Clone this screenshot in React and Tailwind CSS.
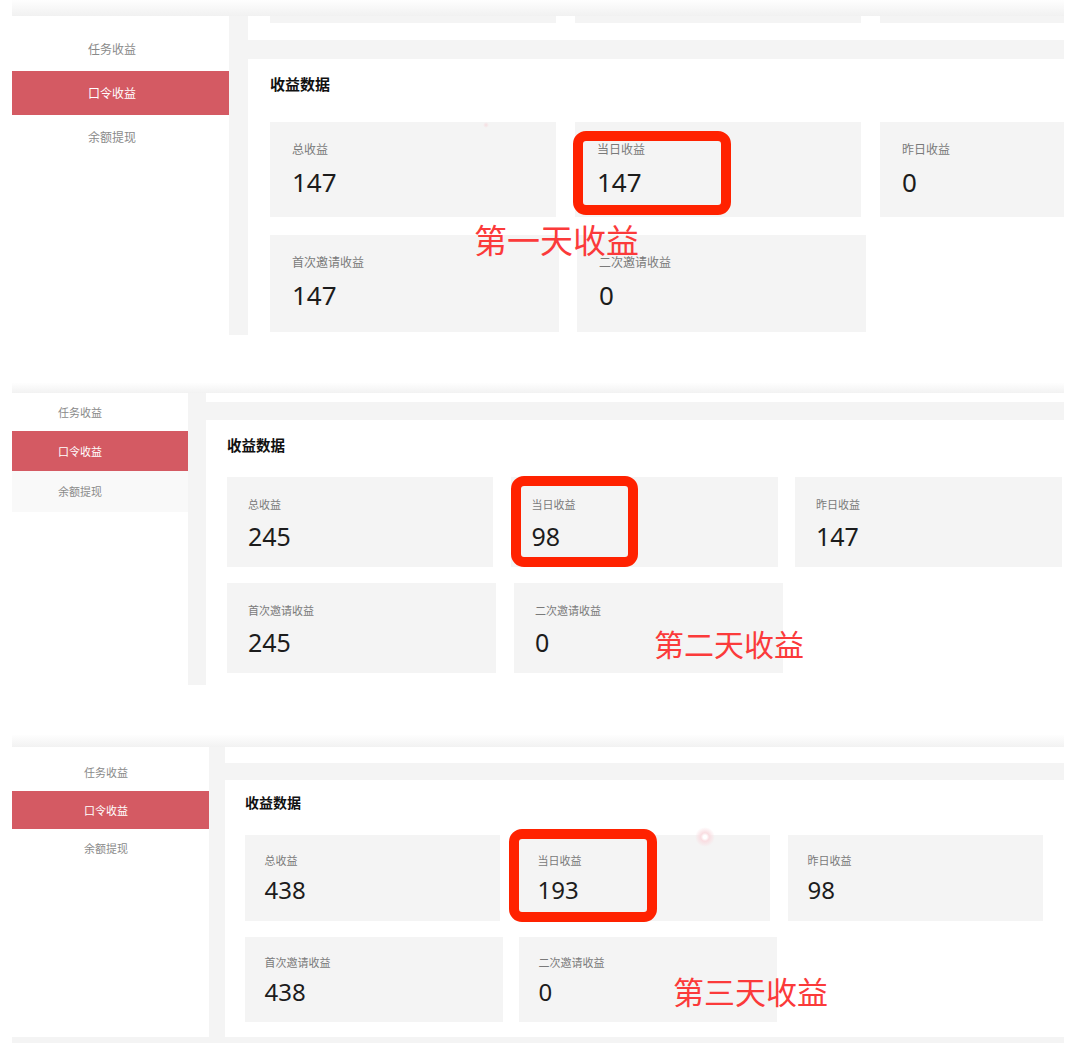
import React from "react";

const CJK = "font-['Noto_Sans_CJK_SC','Noto_Sans',sans-serif]";

function SideItem({ cls, active, children }) {
  return (
    <div
      className={`flex items-center ${CJK} ${cls} ${
        active ? "bg-[#d45a63] text-white" : "text-[#8a8a8a]"
      }`}
    >
      {children}
    </div>
  );
}

function Card({ cls, labelCls, valueCls, label, value }) {
  return (
    <div className={`shrink-0 bg-[#f4f4f4] ${cls}`}>
      <div className={`text-[#7a7a7a] ${CJK} ${labelCls}`}>{label}</div>
      <div className={`text-[#1c1c1c] font-['Noto_Sans',sans-serif] ${valueCls}`}>{value}</div>
    </div>
  );
}

export default function App() {
  return (
    <div className="relative w-[1080px] h-[1059px] bg-white overflow-hidden">
      {/* ---------- Panel 1 ---------- */}
      <div className="ml-[12px] w-[1052px] flex flex-col">
        <div className="h-[16px] bg-linear-to-b from-[#fefefe] to-[#f1f1f1]" />
        <div className="flex">
          <div className="w-[217px] shrink-0 bg-white pt-[11px]">
            <SideItem cls="h-[44px] pl-[76px] text-[12px]">任务收益</SideItem>
            <SideItem cls="h-[44px] pl-[76px] text-[12px]" active>口令收益</SideItem>
            <SideItem cls="h-[44px] pl-[76px] text-[12px]">余额提现</SideItem>
          </div>
          <div className="w-[19px] shrink-0 bg-[#f4f4f4]" />
          <div className="flex-1 min-w-0 overflow-hidden">
            <div className="h-[24px] bg-white flex gap-[19px] pl-[22px]">
              <div className="w-[286px] h-[7px] shrink-0 bg-[#f4f4f4]" />
              <div className="w-[286px] h-[7px] shrink-0 bg-[#f4f4f4]" />
              <div className="w-[286px] h-[7px] shrink-0 bg-[#f4f4f4]" />
            </div>
            <div className="h-[19px] bg-[#f4f4f4]" />
            <div className="bg-white pl-[22px] pt-[15px] pb-[3px]">
              <div className={`h-[20px] leading-[20px] text-[15px] font-bold text-[#111] ${CJK}`}>收益数据</div>
              <div className="mt-[28px] flex gap-[19px]">
                <Card cls="w-[286px] h-[95px] pl-[22px] pt-[19px]" labelCls="text-[12px] leading-[16px]" valueCls="mt-[9px] text-[26px] leading-[32px]" label="总收益" value="147" />
                <Card cls="w-[286px] h-[95px] pl-[22px] pt-[19px]" labelCls="text-[12px] leading-[16px]" valueCls="mt-[9px] text-[26px] leading-[32px]" label="当日收益" value="147" />
                <Card cls="w-[286px] h-[95px] pl-[22px] pt-[19px]" labelCls="text-[12px] leading-[16px]" valueCls="mt-[9px] text-[26px] leading-[32px]" label="昨日收益" value="0" />
              </div>
              <div className="mt-[18px] flex gap-[18px]">
                <Card cls="w-[289px] h-[97px] pl-[22px] pt-[19px]" labelCls="text-[12px] leading-[16px]" valueCls="mt-[9px] text-[26px] leading-[32px]" label="首次邀请收益" value="147" />
                <Card cls="w-[289px] h-[97px] pl-[22px] pt-[19px]" labelCls="text-[12px] leading-[16px]" valueCls="mt-[9px] text-[26px] leading-[32px]" label="二次邀请收益" value="0" />
              </div>
            </div>
          </div>
        </div>
      </div>

      {/* ---------- Panel 2 ---------- */}
      <div className="mt-[48px] ml-[12px] w-[1052px] flex flex-col">
        <div className="h-[10px] bg-linear-to-b from-[#fefefe] to-[#f2f2f2]" />
        <div className="flex">
          <div className="w-[176px] shrink-0 bg-white">
            <SideItem cls="h-[38px] pl-[46px] text-[11px]">任务收益</SideItem>
            <SideItem cls="h-[40px] pl-[46px] text-[11px]" active>口令收益</SideItem>
            <SideItem cls="h-[41px] pl-[46px] text-[11px] bg-[#f9f9f9]">余额提现</SideItem>
          </div>
          <div className="w-[18px] shrink-0 bg-[#f4f4f4]" />
          <div className="flex-1 min-w-0 overflow-hidden">
            <div className="h-[9px] bg-white" />
            <div className="h-[18px] bg-[#f4f4f4]" />
            <div className="bg-white pl-[21px] pt-[15px] pb-[12px]">
              <div className={`h-[20px] leading-[20px] text-[14.5px] font-bold text-[#111] ${CJK}`}>收益数据</div>
              <div className="mt-[22px] flex gap-[17.5px]">
                <Card cls="w-[266px] h-[90px] pl-[21px] pt-[19px]" labelCls="text-[11px] leading-[16px]" valueCls="mt-[9px] text-[25px] leading-[30px]" label="总收益" value="245" />
                <Card cls="w-[267px] h-[90px] pl-[21px] pt-[19px]" labelCls="text-[11px] leading-[16px]" valueCls="mt-[9px] text-[25px] leading-[30px]" label="当日收益" value="98" />
                <Card cls="w-[267px] h-[90px] pl-[21px] pt-[19px]" labelCls="text-[11px] leading-[16px]" valueCls="mt-[9px] text-[25px] leading-[30px]" label="昨日收益" value="147" />
              </div>
              <div className="mt-[16px] flex gap-[18px]">
                <Card cls="w-[269px] h-[90px] pl-[21px] pt-[19px]" labelCls="text-[11px] leading-[16px]" valueCls="mt-[9px] text-[25px] leading-[30px]" label="首次邀请收益" value="245" />
                <Card cls="w-[269px] h-[90px] pl-[21px] pt-[19px]" labelCls="text-[11px] leading-[16px]" valueCls="mt-[9px] text-[25px] leading-[30px]" label="二次邀请收益" value="0" />
              </div>
            </div>
          </div>
        </div>
      </div>

      {/* ---------- Panel 3 ---------- */}
      <div className="mt-[50px] ml-[12px] w-[1052px] flex flex-col">
        <div className="h-[12px] bg-linear-to-b from-[#fefefe] to-[#f2f2f2]" />
        <div className="flex">
          <div className="w-[197px] shrink-0 bg-white pt-[6px]">
            <SideItem cls="h-[38px] pl-[72px] text-[11px]">任务收益</SideItem>
            <SideItem cls="h-[38px] pl-[72px] text-[11px]" active>口令收益</SideItem>
            <SideItem cls="h-[38px] pl-[72px] text-[11px]">余额提现</SideItem>
          </div>
          <div className="w-[16px] shrink-0 bg-[#f4f4f4]" />
          <div className="flex-1 min-w-0 overflow-hidden">
            <div className="h-[16px] bg-white" />
            <div className="h-[17px] bg-[#f4f4f4]" />
            <div className="bg-white pl-[20px] pt-[12px] pb-[15px]">
              <div className={`h-[20px] leading-[20px] text-[14px] font-bold text-[#111] ${CJK}`}>收益数据</div>
              <div className="mt-[23px] flex gap-[18px]">
                <Card cls="w-[255px] h-[86px] pl-[19.5px] pt-[17px]" labelCls="text-[11px] leading-[16px]" valueCls="mt-[8px] text-[24px] leading-[28px]" label="总收益" value="438" />
                <Card cls="w-[252px] h-[86px] pl-[19.5px] pt-[17px]" labelCls="text-[11px] leading-[16px]" valueCls="mt-[8px] text-[24px] leading-[28px]" label="当日收益" value="193" />
                <Card cls="w-[254.5px] h-[86px] pl-[19.5px] pt-[17px]" labelCls="text-[11px] leading-[16px]" valueCls="mt-[8px] text-[24px] leading-[28px]" label="昨日收益" value="98" />
              </div>
              <div className="mt-[16px] flex gap-[16px]">
                <Card cls="w-[258px] h-[85px] pl-[19.5px] pt-[17px]" labelCls="text-[11px] leading-[16px]" valueCls="mt-[8px] text-[24px] leading-[28px]" label="首次邀请收益" value="438" />
                <Card cls="w-[257.5px] h-[85px] pl-[19.5px] pt-[17px]" labelCls="text-[11px] leading-[16px]" valueCls="mt-[8px] text-[24px] leading-[28px]" label="二次邀请收益" value="0" />
              </div>
            </div>
          </div>
        </div>
        <div className="h-[6px] bg-[#f4f4f4]" />
      </div>

      {/* ---------- Annotations (overlay) ---------- */}
      <div className="absolute left-[573px] top-[131px] w-[158px] h-[84px] border-[10px] border-[#ff2200] rounded-[13px]" />
      <div className={`absolute left-[474px] top-[223px] text-[33px] leading-none text-[#fb3a3a] whitespace-nowrap ${CJK}`}>第一天收益</div>

      <div className="absolute left-[511px] top-[476px] w-[127px] h-[91px] border-[10px] border-[#ff2200] rounded-[13px]" />
      <div className={`absolute left-[654px] top-[628px] text-[30px] leading-none text-[#fb3a3a] whitespace-nowrap ${CJK}`}>第二天收益</div>

      <div className="absolute left-[509px] top-[829px] w-[148px] h-[93px] border-[10px] border-[#ff2200] rounded-[13px]" />
      <div className={`absolute left-[673px] top-[975px] text-[31px] leading-none text-[#fb3a3a] whitespace-nowrap ${CJK}`}>第三天收益</div>

      {/* cursor highlights */}
      <div className="absolute left-[695px] top-[827px] w-[20px] h-[20px] rounded-full bg-[radial-gradient(circle,#ffffff_0%,#ffffff_12%,#f9dde1_30%,rgba(255,255,255,0)_70%)]" />
      <div className="absolute left-[483px] top-[122px] w-[6px] h-[6px] rounded-full bg-[radial-gradient(circle,#f6dde0_0%,rgba(255,255,255,0)_70%)]" />
    </div>
  );
}
